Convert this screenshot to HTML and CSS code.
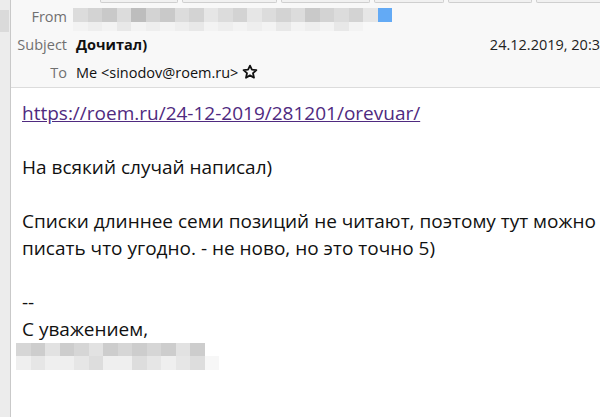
FILE: index.html
```html
<!DOCTYPE html>
<html lang="ru">
<head>
    <meta charset="UTF-8">
    <meta name="viewport" content="width=device-width, initial-scale=1.0">
    <title>Дочитал)</title>
    <link rel="stylesheet" href="styles.css">
</head>
<body>
    <div class="window">
        <div class="sidebar">
            <div class="sidebar-sel"></div>
        </div>
        <div class="main">
            <div class="header">
                <div class="toolbar">
                    <span class="tb-btn b1"></span>
                    <span class="tb-btn b2"></span>
                    <span class="tb-btn b3"></span>
                    <span class="tb-btn b4"></span>
                    <span class="tb-btn b5"></span>
                    <span class="tb-btn b6"></span>
                </div>
                <div class="row from-row">
                    <span class="label">From</span>
                    <div class="blur from-blur">
                        <div class="pix-row dark">
                            <i class="p3"></i><i class="p2"></i><i class="p1"></i><i class="p3"></i><i class="p5"></i><i class="p2"></i><i class="p1"></i><i class="p3"></i><i class="p2"></i><i class="p4"></i><i class="p3"></i><i class="p2"></i><i class="p4"></i><i class="p3"></i><i class="p2"></i><i class="p3"></i><i class="p1"></i><i class="p2"></i><i class="p3"></i><i class="p2"></i><i class="p4"></i><i class="blue"></i>
                        </div>
                        <div class="pix-row light">
                            <i class="q1"></i><i class="q2"></i><i class="q1"></i><i class="q3"></i><i class="q1"></i><i class="q2"></i><i class="q1"></i><i class="q2"></i><i class="q3"></i><i class="q1"></i><i class="q2"></i><i class="q1"></i><i class="q2"></i><i class="q1"></i><i class="q3"></i><i class="q1"></i><i class="q2"></i><i class="q1"></i><i class="q3"></i><i class="q1"></i>
                        </div>
                    </div>
                </div>
                <div class="row subject-row">
                    <span class="label">Subject</span>
                    <span class="subject">Дочитал)</span>
                    <span class="date">24.12.2019, 20:3</span>
                </div>
                <div class="row to-row">
                    <span class="label">To</span>
                    <span class="recipient">Me &lt;sinodov@roem.ru&gt;</span>
                    <svg class="star" width="16" height="16" viewBox="0 0 16 16">
                        <path d="M8 1.6 L9.9 5.7 L14.4 6.2 L11 9.2 L12 13.7 L8 11.4 L4 13.7 L5 9.2 L1.6 6.2 L6.1 5.7 Z" fill="none" stroke="#111" stroke-width="1.8" stroke-linejoin="round"/>
                    </svg>
                </div>
            </div>

            <div class="message">
                <p class="para"><a href="#" class="link">https://roem.ru/24-12-2019/281201/orevuar/</a></p>
                <p class="para">На всякий случай написал)</p>
                <p class="para">Списки длиннее семи позиций не читают, поэтому тут можно<br>писать что угодно. - не ново, но это точно 5)</p>
                <p class="sig">--<br>С уважением,</p>
                <div class="blur sig-blur">
                    <div class="pix-row dark">
                        <i class="r1"></i><i class="r2"></i><i class="r3"></i><i class="r2"></i><i class="r1"></i><i class="r3"></i><i class="r2"></i><i class="r1"></i><i class="r2"></i><i class="r1"></i><i class="r2"></i><i class="r3"></i><i class="r2"></i>
                    </div>
                    <div class="pix-row light">
                        <i class="s1"></i><i class="s2"></i><i class="s1"></i><i class="s1"></i><i class="s2"></i><i class="s3"></i><i class="s1"></i><i class="s1"></i><i class="s3"></i><i class="s2"></i><i class="s1"></i><i class="s2"></i><i class="s3"></i><i class="s4"></i>
                    </div>
                </div>
            </div>
        </div>
    </div>
</body>
</html>
```

FILE: styles.css
```css
html, body { margin: 0; padding: 0; overflow: hidden; background: #fff; }
body { font-family: "Open Sans", "Noto Sans", sans-serif; color: #111; }

.window { display: flex; height: 417px; }

/* left folder pane edge */
.sidebar { width: 10px; flex: none; background: #ececec; border-right: 1px solid #c9c9c9; }
.sidebar-sel { height: 22px; margin-top: 10px; width: 9px; background: #dadada; }

.main { flex: 1; min-width: 0; overflow: hidden; }

/* message header */
.header { background: #f8f8f8; border-bottom: 1px solid #dcdcdc; height: 87px; }
.toolbar { display: flex; height: 3px; }
.tb-btn { flex: none; height: 2px; border: 1px solid #cfcfcf; border-top: none; border-radius: 0 0 2px 2px; background: #f1f1f1; }
.b1 { margin-left: 89px; width: 76px; }
.b2 { margin-left: 4px; width: 93px; }
.b3 { margin-left: 4px; width: 87px; }
.b4 { margin-left: 4px; width: 68px; }
.b5 { margin-left: 4px; width: 82px; }
.b6 { margin-left: 4px; width: 80px; }

.row { display: flex; align-items: center; height: 28px; font-size: 14.5px; }
.label { width: 56px; flex: none; text-align: right; color: #707070; margin-right: 9px; }
.from-row { height: 27px; }
.subject { font-weight: bold; color: #111; }
.date { margin-left: auto; color: #222; white-space: nowrap; }
.recipient { color: #111; }
.star { margin-left: 4px; }

/* pixelated hidden text */
.blur { display: flex; flex-direction: column; }
.pix-row { display: flex; }
.pix-row i { display: block; width: 14.5px; }
.from-blur { margin-left: -3px; margin-top: 6px; }
.from-blur .dark i { height: 14px; }
.from-blur .light i { height: 9px; }
.p1 { background: #c9c9c9; }
.p2 { background: #d3d3d3; }
.p3 { background: #dcdcdc; }
.p4 { background: #e6e6e6; }
.p5 { background: #bdbdbd; }
.blue { background: #63aaf5; }
.q1 { background: #f3f3f3; }
.q2 { background: #eeeeee; }
.q3 { background: #e8e8e8; }

/* message body */
.message { padding: 12px 0 0 11px; font-size: 19px; line-height: 27px; color: #111; }
.para { margin: 0 0 27px; white-space: nowrap; }
.link { color: #4f2a80; text-decoration: underline; }
.sig { margin: 0; }
.sig-blur { margin-left: -6px; margin-top: 0; }
.sig-blur .dark i { height: 13px; }
.sig-blur .light i { height: 14px; }
.r1 { background: #d6d6d6; }
.r2 { background: #cdcdcd; }
.r3 { background: #e2e2e2; }
.s1 { background: #efefef; }
.s2 { background: #e6e6e6; }
.s3 { background: #dddddd; }
.s4 { background: #f7f7f7; }
```
